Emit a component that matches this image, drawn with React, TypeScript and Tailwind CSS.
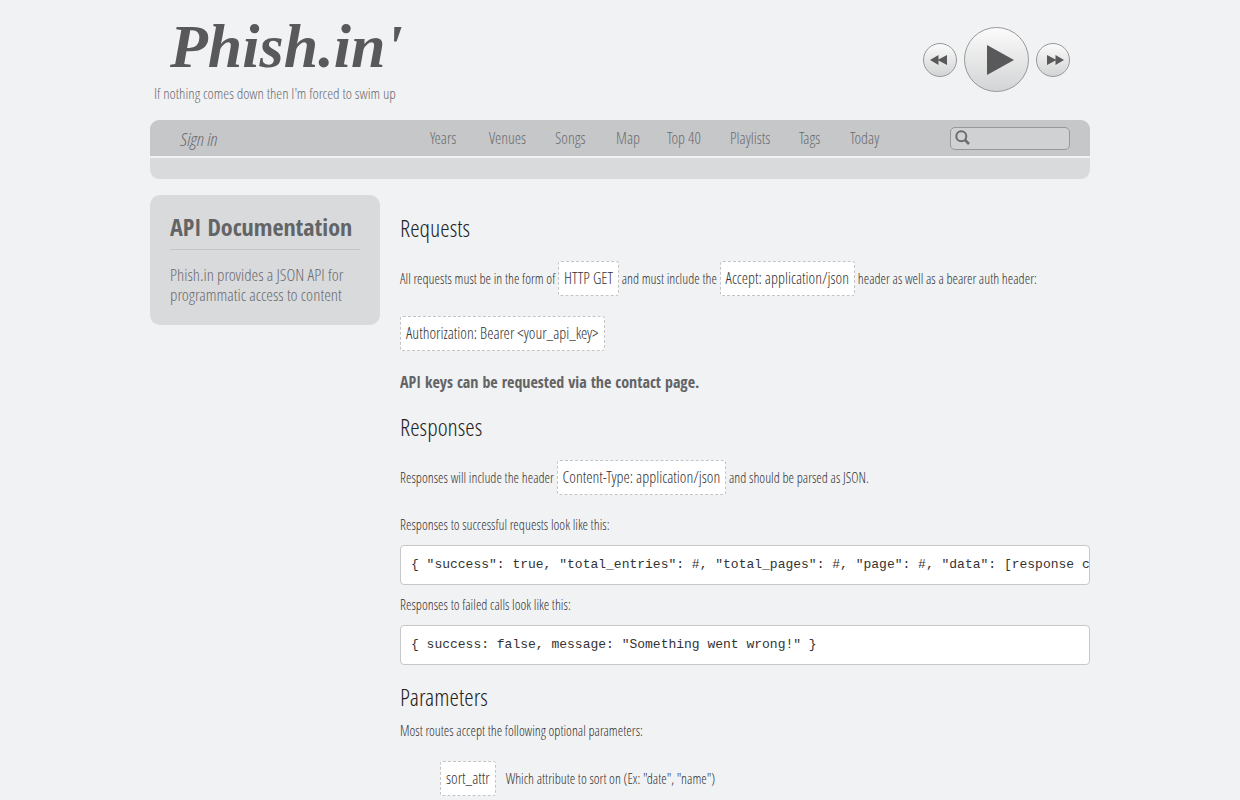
import { ReactNode } from "react";

const NAV_LINKS = [
  { label: "Years", width: "w-[59px]" },
  { label: "Venues", width: "w-[66px]" },
  { label: "Songs", width: "w-[61px]" },
  { label: "Map", width: "w-[51px]" },
  { label: "Top 40", width: "w-[63px]" },
  { label: "Playlists", width: "w-[69px]" },
  { label: "Tags", width: "w-[51px]" },
  { label: "Today", width: "w-[40px]" },
];

function Code({ children }: { children: ReactNode }) {
  return (
    <code className="inline-block rounded-[3px] border border-dashed border-[#c4c4c6] bg-white px-[5px] py-[6px] font-['Open_Sans_Condensed_Light','Open_Sans_Condensed',sans-serif] text-[16px] leading-[21px] text-[#333]">
      {children}
    </code>
  );
}

function Pre({ children }: { children: ReactNode }) {
  return (
    <pre className="overflow-hidden rounded border border-[#c8c8ca] bg-white px-[10px] py-[9px] font-['Liberation_Mono',monospace] text-[13px] leading-5 text-[#333]">
      {children}
    </pre>
  );
}

function Title({ children }: { children: ReactNode }) {
  return <h2 className="text-[24px] leading-10 text-[#222]">{children}</h2>;
}

function SkipIcon({ className }: { className?: string }) {
  return (
    <svg viewBox="0 0 17 10" className={className} fill="#59595b">
      <path d="M0 0L8.5 4.4V0L17 5L8.5 10V5.6L0 10Z" />
    </svg>
  );
}

function Player() {
  const round =
    "flex items-center justify-center rounded-full border border-[#98989a] bg-linear-to-b from-[#fbfbfb] to-[#d3d4d5]";

  return (
    <div className="mt-[27px] mr-5 flex h-[65px] items-center gap-[7px]">
      <button type="button" aria-label="Previous" className={`${round} size-[34px] pr-1`}>
        <SkipIcon className="h-[10px] w-[17px] rotate-180" />
      </button>
      <button type="button" aria-label="Play" className={`${round} size-[65px] pl-2`}>
        <svg viewBox="0 0 27 30" className="h-[30px] w-[27px]" fill="#59595b">
          <path d="M0 0L27 15L0 30Z" />
        </svg>
      </button>
      <button type="button" aria-label="Next" className={`${round} size-[34px] pl-1`}>
        <SkipIcon className="h-[10px] w-[17px]" />
      </button>
    </div>
  );
}

function Header() {
  return (
    <header className="flex h-[120px] items-start justify-between">
      <div>
        <a
          href="#"
          className="mt-[11px] ml-5 block h-[70px] font-['Liberation_Serif',serif] text-[62px] leading-[70px] font-bold text-[#59595b] italic"
        >
          Phish.in'
        </a>
        <p className="ml-1 text-[15px] leading-6 text-[#6b6c6e]">
          If nothing comes down then I'm forced to swim up
        </p>
      </div>
      <Player />
    </header>
  );
}

function NavBar() {
  return (
    <div className="overflow-hidden rounded-[9px]">
      <nav className="flex h-9 items-center bg-[#c6c7c9] pr-5 pl-[30px] text-[16px] text-[#6b6c6e]">
        <a href="#" className="w-[250px] pt-[2px] text-[19px] italic">
          Sign in
        </a>
        {NAV_LINKS.map(({ label, width }) => (
          <a key={label} href="#" className={`${width} whitespace-nowrap`}>
            {label}
          </a>
        ))}
        <label className="ml-auto flex h-[23px] w-[120px] items-center rounded-[5px] border border-[#98989a] bg-[#d0d1d3] pl-1">
          <svg
            viewBox="0 0 15 15"
            className="mb-px size-[15px] shrink-0"
            fill="none"
            stroke="#6b6c6e"
            strokeWidth="2"
          >
            <circle cx="6.3" cy="6.3" r="5" />
            <path d="M10 10L14 14" strokeWidth="2.5" />
          </svg>
          <input type="text" aria-label="Search" className="w-full min-w-0 px-1 text-[14px] outline-none" />
        </label>
      </nav>
      <div className="mt-0.5 h-[21px] bg-[#d9dadc]" />
    </div>
  );
}

function Sidebar() {
  return (
    <aside className="w-[230px] shrink-0 rounded-[10px] bg-[#d9dadc] px-5 pt-[15px] pb-5">
      <h1 className="border-b border-[#c4c5c7] pb-[6px] font-['Open_Sans_Condensed',sans-serif] text-[24px] leading-[33px] font-bold whitespace-nowrap text-[#636466]">
        API Documentation
      </h1>
      <p className="mt-[15px] text-[17px] leading-5 text-[#6b6c6e]">
        Phish.in provides a JSON API for programmatic access to content
      </p>
    </aside>
  );
}

export default function App() {
  return (
    <div className="h-screen overflow-hidden bg-[#f1f2f4] font-['Open_Sans_Condensed_Light','Open_Sans_Condensed',sans-serif] font-light">
      <div className="mx-auto max-w-[940px]">
        <Header />
        <NavBar />
        <div className="mt-4 flex items-start gap-5">
          <Sidebar />
          <main className="min-w-0 flex-1 pt-[13px] text-[14px] leading-5 text-[#333]">
            <Title>Requests</Title>
            <p className="mt-[13px]">
              All requests must be in the form of <Code>HTTP GET</Code> and must include the{" "}
              <Code>Accept: application/json</Code> header as well as a bearer auth header:
            </p>
            <p className="mt-5">
              <Code>Authorization: Bearer &lt;your_api_key&gt;</Code>
            </p>
            <p className="mt-[21px] font-['Open_Sans_Condensed',sans-serif] text-[16px] font-bold text-[#636466]">
              API keys can be requested via the <a href="#">contact page.</a>
            </p>

            <div className="mt-[15px]">
              <Title>Responses</Title>
            </div>
            <p className="mt-[13px]">
              Responses will include the header <Code>Content-Type: application/json</Code> and should be
              parsed as JSON.
            </p>
            <p className="mt-5 mb-[10px]">Responses to successful requests look like this:</p>
            <Pre>
              {`{ "success": true, "total_entries": #, "total_pages": #, "page": #, "data": [response content] }`}
            </Pre>
            <p className="my-[10px]">Responses to failed calls look like this:</p>
            <Pre>{`{ success: false, message: "Something went wrong!" }`}</Pre>

            <div className="mt-3">
              <Title>Parameters</Title>
            </div>
            <p className="mt-1">Most routes accept the following optional parameters:</p>
            <dl className="mt-5 flex items-baseline gap-[10px] pl-10">
              <dt>
                <Code>sort_attr</Code>
              </dt>
              <dd>Which attribute to sort on (Ex: "date", "name")</dd>
            </dl>
          </main>
        </div>
      </div>
    </div>
  );
}
